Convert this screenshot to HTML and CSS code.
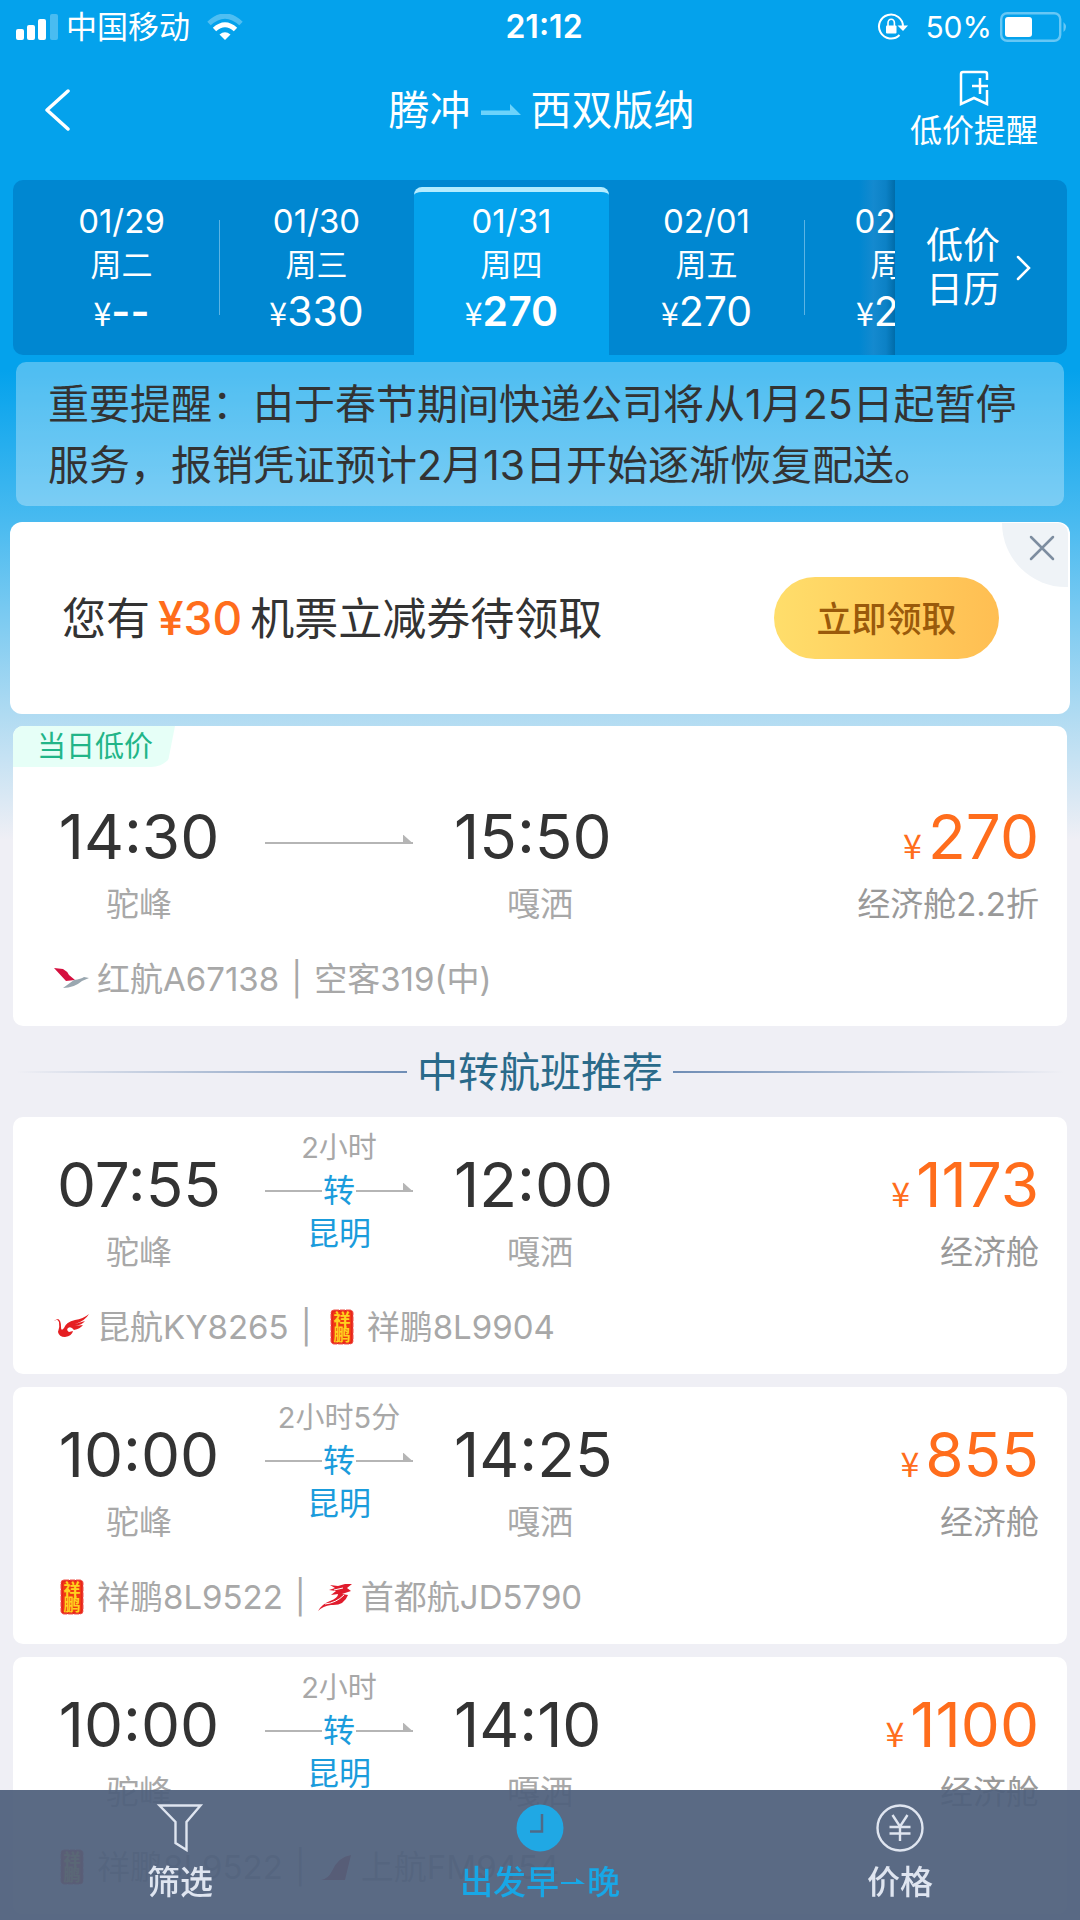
FILE: index.html
```html
<!DOCTYPE html>
<html lang="zh-CN">
<head>
<meta charset="utf-8">
<meta name="viewport" content="width=device-width, initial-scale=1">
<title>腾冲 - 西双版纳 航班列表</title>
<link rel="stylesheet" href="styles.css">
</head>
<body>
<svg class="defs" aria-hidden="true">
  <symbol id="logo-seal" viewBox="0 0 24 36">
    <rect x="1" y="1" width="22" height="34" rx="3" fill="#e8251b" stroke="#f0544a" stroke-dasharray="5 1"/>
    <rect x="3" y="3" width="18" height="30" rx="1" fill="#f03a12"/>
    <text x="12" y="17" class="seal-text">祥</text>
    <text x="12" y="32" class="seal-text">鹏</text>
  </symbol>
</svg>

<div class="status-bar">
  <div class="status-left">
    <svg width="42" height="26" viewBox="0 0 42 26" fill="#fff" aria-hidden="true">
      <rect x="0" y="15" width="8" height="11" rx="2"/><rect x="11" y="11" width="8" height="15" rx="2"/><rect x="22" y="5" width="8" height="21" rx="2"/><rect x="34" y="0" width="8" height="26" rx="2" opacity=".28"/>
    </svg>
    <span class="carrier">中国移动</span>
    <svg width="36" height="26" viewBox="0 0 36 26" fill="none" aria-hidden="true">
      <path d="M2 9.500Q18-5.500 34 9.500" stroke="#fff" stroke-width="5" opacity=".3"/>
      <path d="M7.500 15.500Q18 6 28.500 15.500" stroke="#fff" stroke-width="5"/>
      <path d="M12.500 20.500Q18 16 23.500 20.500L18 26Z" fill="#fff"/>
    </svg>
  </div>
  <time class="clock">21:12</time>
  <div class="status-right">
    <svg width="31" height="28" viewBox="0 0 31 28" aria-hidden="true">
      <path d="M26 13.500A12 12 0 1 0 22.500 22" fill="none" stroke="#fff" stroke-width="2"/>
      <path d="M20.500 12.500H31L26 18Z" fill="#fff"/>
      <rect x="9" y="12.500" width="10.500" height="8" rx="1" fill="#fff"/>
      <path d="M11 13V10a3.200 3.800 0 0 1 6.400 0v3" fill="none" stroke="#fff" stroke-width="1.600"/>
    </svg>
    <span class="battery-level">50%</span>
    <svg width="68" height="30" viewBox="0 0 68 30" aria-hidden="true">
      <rect x="1.200" y="1.200" width="59" height="27.600" rx="6" fill="none" stroke="#67c7f5" stroke-width="2.400"/>
      <rect x="5" y="5" width="27" height="20" rx="3" fill="#fff"/>
      <path d="M63.500 10q5 5 0 10z" fill="#67c7f5"/>
    </svg>
  </div>
</div>

<header class="nav">
  <button class="back" aria-label="返回">
    <svg width="26" height="42" viewBox="0 0 26 42" fill="none" stroke="#fff" stroke-width="3.500" stroke-linecap="round" stroke-linejoin="round"><path d="M23 2 2 21 23 40"/></svg>
  </button>
  <h1 class="route-title">腾冲
    <svg width="40" height="12" viewBox="0 0 40 12" role="img" aria-label="到"><path d="M0 6.500H29V0L40 11H0Z" fill="#6cd3fb"/></svg>
    西双版纳</h1>
  <button class="alert">
    <svg width="30" height="36" viewBox="0 0 30 36" fill="none" stroke="#fff" stroke-width="2.500" aria-hidden="true"><path d="M28 10V4Q28 2 26 2H4Q2 2 2 4V34L15 28 28 34V20M21 8V24M13 16H29"/></svg>
    <span>低价提醒</span>
  </button>
</header>

<nav class="calendar" aria-label="日期">
  <div class="days">
    <button class="day"><span class="date">01/29</span><span class="week">周二</span><span class="fare"><i>¥</i><b>--</b></span></button>
    <button class="day day-ruled"><span class="date">01/30</span><span class="week">周三</span><span class="fare"><i>¥</i>330</span></button>
    <button class="day day-active" aria-current="date"><span class="date">01/31</span><span class="week">周四</span><span class="fare"><i>¥</i><b>270</b></span></button>
    <button class="day"><span class="date">02/01</span><span class="week">周五</span><span class="fare"><i>¥</i>270</span></button>
    <button class="day day-ruled"><span class="date">02/02</span><span class="week">周六</span><span class="fare"><i>¥</i>270</span></button>
  </div>
  <button class="month">
    <span>低价<br>日历</span>
    <svg width="16" height="26" viewBox="0 0 16 26" fill="none" stroke="#fff" stroke-width="2.500" stroke-linecap="round" aria-hidden="true"><path d="M2 2 13 13 2 24"/></svg>
  </button>
</nav>

<p class="notice">重要提醒：由于春节期间快递公司将从1月25日起暂停服务，报销凭证预计2月13日开始逐渐恢复配送。</p>

<section class="coupon">
  <p class="coupon-text">您有<strong>¥30</strong>机票立减券待领取</p>
  <button class="claim">立即领取</button>
  <button class="close" aria-label="关闭">
    <svg width="26" height="26" viewBox="0 0 26 26" fill="none" stroke="#7d8da0" stroke-width="2.500" stroke-linecap="round"><path d="M2 2 24 24M24 2 2 24"/></svg>
  </button>
</section>

<main class="flights">
  <article class="card card-direct">
    <span class="tag">当日低价</span>
    <div class="trip">
      <div class="stop stop-from"><time class="hour">14:30</time><span class="airport">驼峰</span></div>
      <div class="route"><div class="track"><span class="line line-end"></span></div></div>
      <div class="stop"><time class="hour">15:50</time><span class="airport">嘎洒</span></div>
      <div class="price"><span class="amount"><i>¥</i>270</span><span class="cabin">经济舱2.2折</span></div>
    </div>
    <div class="carriers">
      <svg class="logo" viewBox="0 0 36 36" aria-hidden="true"><path d="M0 7 9 8Q13 10 15 14L21 19 12 20Z" fill="#d5103f"/><path d="M9 27 20 19Q27 18 30 16L35 17 28 20Q20 27 9 27Z" fill="#9aa7b0"/></svg>
      <span>红航A67138</span><span class="bar">|</span><span>空客319(中)</span>
    </div>
  </article>

  <h2 class="divider">中转航班推荐</h2>

  <article class="card">
    <div class="trip">
      <div class="stop stop-from"><time class="hour">07:55</time><span class="airport">驼峰</span></div>
      <div class="route"><span class="wait">2小时</span><div class="track"><span class="line"></span>转<span class="line line-end"></span></div><span class="via">昆明</span></div>
      <div class="stop"><time class="hour">12:00</time><span class="airport">嘎洒</span></div>
      <div class="price"><span class="amount"><i>¥</i>1173</span><span class="cabin">经济舱</span></div>
    </div>
    <div class="carriers">
      <svg class="logo" viewBox="0 0 36 36" aria-hidden="true"><path d="M0 12Q3 9 5 13 6 18 4 23 5 28 11 28 18 27 19 22L15 23Q12 21 14 19 17 17 20 21 26 20 29 16L21 17Q28 16 31 12L21 15Q31 12 35 5 29 10 21 11 12 13 10 19 7 23 7 18 7 11 4 10Z" fill="#e51f22"/><circle cx="15" cy="21" r="1.200" fill="#fff"/></svg>
      <span>昆航KY8265</span><span class="bar">|</span>
      <svg class="logo logo-seal" role="img" aria-label="祥鹏"><use href="#logo-seal"/></svg>
      <span>祥鹏8L9904</span>
    </div>
  </article>

  <article class="card">
    <div class="trip">
      <div class="stop stop-from"><time class="hour">10:00</time><span class="airport">驼峰</span></div>
      <div class="route"><span class="wait">2小时5分</span><div class="track"><span class="line"></span>转<span class="line line-end"></span></div><span class="via">昆明</span></div>
      <div class="stop"><time class="hour">14:25</time><span class="airport">嘎洒</span></div>
      <div class="price"><span class="amount"><i>¥</i>855</span><span class="cabin">经济舱</span></div>
    </div>
    <div class="carriers">
      <svg class="logo logo-seal" role="img" aria-label="祥鹏"><use href="#logo-seal"/></svg>
      <span>祥鹏8L9522</span><span class="bar">|</span>
      <svg class="logo" viewBox="0 0 36 36" aria-hidden="true"><path d="M12 6 20 7 27 5 34 5 29 9 33 12 24 15 30 16Q26 27 13 26 5 27 0 32 4 25 12 22 20 19 20 15L13 16 18 12 11 11 17 9Z" fill="#e01b2c"/><path d="M7 25Q18 24 26 16M16 11 25 9" stroke="#fff" fill="none"/></svg>
      <span>首都航JD5790</span>
    </div>
  </article>

  <article class="card">
    <div class="trip">
      <div class="stop stop-from"><time class="hour">10:00</time><span class="airport">驼峰</span></div>
      <div class="route"><span class="wait">2小时</span><div class="track"><span class="line"></span>转<span class="line line-end"></span></div><span class="via">昆明</span></div>
      <div class="stop"><time class="hour">14:10</time><span class="airport">嘎洒</span></div>
      <div class="price"><span class="amount"><i>¥</i>1100</span><span class="cabin">经济舱</span></div>
    </div>
    <div class="carriers">
      <svg class="logo logo-seal" role="img" aria-label="祥鹏"><use href="#logo-seal"/></svg>
      <span>祥鹏8L9522</span><span class="bar">|</span>
      <svg class="logo" viewBox="0 0 36 36" aria-hidden="true"><path d="M3 31Q10 30 14 22 20 8 33 6L27 31Z" fill="#c8202e"/></svg>
      <span>上航FM9454</span>
    </div>
  </article>
</main>

<nav class="toolbar" aria-label="筛选与排序">
  <button class="tool">
    <svg width="48" height="48" viewBox="0 0 48 48" fill="none" stroke="currentColor" stroke-width="2.400" aria-hidden="true"><path d="M3.500 1.500H44.500L30.500 18V46L19.500 39V18Z"/></svg>
    <span>筛选</span>
  </button>
  <button class="tool tool-active" aria-pressed="true">
    <svg width="48" height="48" viewBox="0 0 48 48" aria-hidden="true"><circle cx="24" cy="24" r="23.500" fill="#20a8e4"/><path d="M14 27.500H26V10" fill="none" stroke="#4f6a88" stroke-width="2.500"/></svg>
    <span>出发早<svg class="sort-arrow" width="24" height="8" viewBox="0 0 24 8" aria-hidden="true"><path d="M0 4H15V0L24 6H0Z" fill="currentColor"/></svg>晚</span>
  </button>
  <button class="tool">
    <svg width="48" height="48" viewBox="0 0 48 48" fill="none" stroke="currentColor" stroke-width="2.400" aria-hidden="true"><circle cx="24" cy="24" r="22.500"/><path d="M16.500 11 24 22.500 31.500 11M13.500 23H34.500M13.500 29.500H34.500M24 22V37"/></svg>
    <span>价格</span>
  </button>
</nav>
</body>
</html>
```

FILE: styles.css
```css
* {
  box-sizing: border-box;
}

body {
  margin: 0;
  color: #333;
  font-family: Inter, "Noto Sans CJK SC", sans-serif;
  font-size: 33px;
  background: #efeff5 linear-gradient(#04a2ec 0, #04a2ec 370px, #48baf0 520px, #b0dbf2 715px, #efeff5 840px) no-repeat;
}

button {
  margin: 0;
  padding: 0;
  border: 0;
  background: none;
  color: inherit;
  font: inherit;
  cursor: pointer;
}

p, h1, h2 {
  margin: 0;
  font-weight: 400;
}

i {
  font-style: normal;
  font-family: "Noto Sans CJK SC", sans-serif;
  line-height: 1;
}

svg {
  flex: none;
}

.defs {
  display: none;
}

/* Status bar */
.status-bar {
  display: grid;
  grid-template-columns: 1fr auto 1fr;
  align-items: center;
  height: 54px;
  padding: 0 12px 0 16px;
  color: #fff;
  font-size: 30px;
  line-height: 54px;
}

.status-left,
.status-right {
  display: flex;
  align-items: center;
}

.carrier {
  margin: 0 17px 0 8px;
  font-size: 31px;
}

.clock {
  padding-left: 4px;
  font-size: 32px;
  font-weight: 600;
}

.status-right {
  justify-content: flex-end;
}

.battery-level {
  margin: 0 8px 0 17px;
}

/* Title bar */
.nav {
  display: grid;
  grid-template-columns: 1fr auto 1fr;
  align-items: center;
  height: 126px;
  padding: 0 42px 14px 45px;
  color: #fff;
}

.back {
  justify-self: start;
  height: 42px;
}

.back svg,
.alert svg {
  display: block;
}

.route-title {
  display: flex;
  align-items: center;
  gap: 10px;
  font-size: 41px;
  line-height: 60px;
}

.alert {
  display: flex;
  flex-direction: column;
  align-items: center;
  justify-self: end;
  gap: 6px;
  font-size: 32px;
  line-height: 38px;
}

/* Date strip */
.calendar {
  display: flex;
  height: 175px;
  margin: 0 13px 7px;
  border-radius: 10px;
  background: #0087d1;
  color: #fff;
  overflow: hidden;
}

.days {
  position: relative;
  display: flex;
  flex: 1;
  min-width: 0;
  padding-left: 11px;
  overflow: hidden;
}

.days::after {
  content: "";
  position: absolute;
  top: 0;
  right: 0;
  bottom: 0;
  width: 36px;
  background: linear-gradient(90deg, rgba(60, 150, 205, 0), rgba(40, 140, 205, .5) 40%, rgba(20, 125, 190, .6) 75%, rgba(0, 105, 165, .9));
  z-index: 0;
}

.day {
  position: relative;
  z-index: 1;
  display: flex;
  flex: 0 0 195px;
  flex-direction: column;
  align-items: center;
  padding-top: 19px;
}

.day-ruled::before {
  content: "";
  position: absolute;
  top: 40px;
  left: 0;
  width: 1px;
  height: 95px;
  background: #5cb4e4;
}

.day-active {
  margin-top: 7px;
  padding-top: 7px;
  border-top: 5px solid #b4ecff;
  border-radius: 8px 8px 0 0;
  background: #04a2ec;
}

.date {
  font-size: 33px;
  line-height: 44px;
}

.week {
  font-size: 31px;
  line-height: 44px;
}

.fare {
  font-size: 41px;
  line-height: 48px;
}

.fare i {
  font-size: 32px;
}

.fare b {
  font-weight: 600;
}

.month {
  display: flex;
  align-items: center;
  gap: 16px;
  width: 172px;
  padding-left: 31px;
  font-size: 37px;
  line-height: 44px;
}

/* Notice and coupon */
.notice {
  margin: 0 16px 16px;
  padding: 12px 32px 10px;
  border-radius: 10px;
  background: rgba(255, 255, 255, .3);
  font-size: 41px;
  line-height: 61px;
}

.coupon {
  position: relative;
  display: flex;
  align-items: center;
  justify-content: space-between;
  height: 192px;
  margin: 0 10px 12px;
  padding: 0 71px 0 52px;
  border-radius: 12px;
  background: #fff;
  overflow: hidden;
}

.coupon-text {
  font-size: 44px;
  line-height: 60px;
}

.coupon-text strong {
  margin: 0 8px;
  color: #ff6d1c;
  font-size: 46px;
  font-weight: 500;
}

.claim {
  width: 225px;
  height: 82px;
  padding-bottom: 4px;
  border-radius: 41px;
  background: linear-gradient(90deg, #ffde6b, #ffbe52);
  color: #9a5a0b;
  font-size: 35px;
  font-weight: 500;
}

.close {
  position: absolute;
  top: 1px;
  right: 2px;
  display: flex;
  align-items: flex-start;
  width: 66px;
  height: 64px;
  padding: 12px 0 0 27px;
  border-radius: 0 10px 0 64px;
  background: #eff3f7;
}

/* Flight cards */
.flights {
  display: flex;
  flex-direction: column;
  gap: 13px;
  padding: 0 13px 6px;
}

.card {
  position: relative;
  padding: 9px 28px 27px 41px;
  border-radius: 10px;
  background: #fff;
}

.card-direct {
  padding-top: 52px;
}

.tag {
  position: absolute;
  top: 0;
  left: 0;
  padding: 0 22px 0 24px;
  border-radius: 10px 0 24px 0;
  background: #e6fff7;
  clip-path: polygon(0 0, 100% 0, 95% 100%, 0 100%);
  color: #22b588;
  font-size: 29px;
  line-height: 41px;
}

.trip {
  display: grid;
  grid-template-columns: 170px 148px 172px 1fr;
  column-gap: 41px;
  height: 146px;
}

.stop,
.price {
  display: flex;
  flex-direction: column;
  gap: 17px;
  padding-top: 29px;
}

.stop-from {
  text-align: center;
}

.hour,
.amount {
  height: 60px;
  font-size: 62px;
  line-height: 60px;
}

.airport,
.cabin {
  line-height: 40px;
}

.airport {
  color: #a8a8a8;
  text-align: center;
}

.route {
  display: flex;
  flex-direction: column;
  align-items: center;
  line-height: 43px;
}

.card-direct .route {
  padding-top: 43px;
}

.wait {
  color: #a8a8a8;
  font-size: 29px;
}

.track {
  display: flex;
  align-items: center;
  align-self: stretch;
  height: 43px;
  gap: 1px;
  color: #1a9cdc;
  font-size: 32px;
}

.via {
  color: #1a9cdc;
  font-size: 32px;
}

.line {
  position: relative;
  flex: 1;
  height: 2px;
  background: #b5b5b5;
}

.line-end::after {
  content: "";
  position: absolute;
  right: 0;
  bottom: 0;
  width: 10px;
  height: 9px;
  background: #b5b5b5;
  clip-path: polygon(0 0, 100% 100%, 0 100%);
}

.price {
  align-items: flex-end;
}

.amount {
  color: #ff6d1c;
}

.amount i {
  margin-right: 6px;
  font-size: 34px;
}

.cabin {
  color: #999;
}

.carriers {
  display: flex;
  align-items: center;
  height: 40px;
  margin-top: 35px;
  color: #a8a8a8;
  line-height: 40px;
  white-space: nowrap;
}

.logo {
  width: 36px;
  height: 36px;
  margin-right: 7px;
}

.bar {
  margin: 0 12px;
}

.seal-text {
  fill: #ffd21f;
  font-family: "Noto Sans CJK SC", sans-serif;
  font-size: 17px;
  font-weight: 700;
  text-anchor: middle;
}

.divider {
  display: flex;
  align-items: center;
  gap: 10px;
  height: 65px;
  padding: 0 3px;
  color: #2a6a8a;
  font-size: 41px;
  line-height: 60px;
}

.divider::before,
.divider::after {
  content: "";
  flex: 1;
  height: 2px;
  background: linear-gradient(90deg, rgba(111, 141, 181, 0), #6f8db5);
}

.divider::after {
  background: linear-gradient(270deg, rgba(111, 141, 181, 0), #6f8db5);
}

/* Bottom toolbar */
.toolbar {
  position: fixed;
  right: 0;
  bottom: 0;
  left: 0;
  display: grid;
  grid-template-columns: repeat(3, 1fr);
  height: 130px;
  background: rgba(80, 97, 124, .94);
  color: #dfe5f0;
}

.tool {
  display: flex;
  flex-direction: column;
  align-items: center;
  gap: 7px;
  padding-top: 14px;
  font-size: 33px;
  font-weight: 500;
  line-height: 46px;
}

.tool-active {
  color: #18a7e6;
}

.sort-arrow {
  margin: 0 2px;
  vertical-align: 8px;
}
```
